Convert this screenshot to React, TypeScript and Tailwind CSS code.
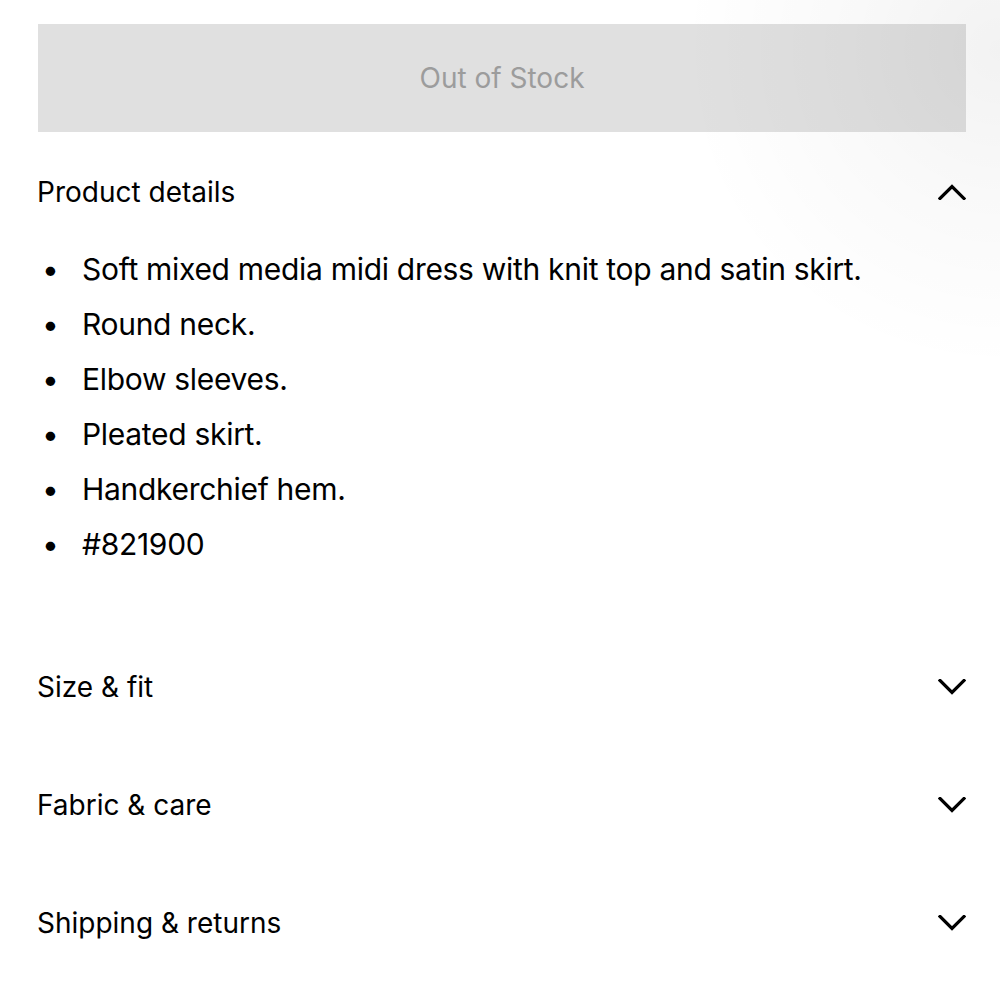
import React from "react"

const details = [
  "Soft mixed media midi dress with knit top and satin skirt.",
  "Round neck.",
  "Elbow sleeves.",
  "Pleated skirt.",
  "Handkerchief hem.",
  "#821900",
]

const sections = ["Size & fit", "Fabric & care", "Shipping & returns"]

function Chevron({ up }: { up?: boolean }) {
  return (
    <svg width="28" height="16" viewBox="0 0 28 16" fill="none" className="shrink-0">
      <path
        d={up ? "M2 14.5 L14 2.5 L26 14.5" : "M2 1.5 L14 13.5 L26 1.5"}
        stroke="#000"
        strokeWidth="3.2"
        strokeLinecap="square"
      />
    </svg>
  )
}

export default function App() {
  return (
    <div className="relative min-h-[1000px] w-[1000px] overflow-hidden bg-white font-['Inter','Noto_Sans',sans-serif] text-black">
      <div className="pl-[38px] pr-[34px] pt-[24px]">
        <button className="flex h-[108px] w-full items-center justify-center bg-[#e0e0e0] text-[28px] text-[#9c9c9c]">
          Out of Stock
        </button>

        <div className="flex items-center justify-between pt-[40px] pb-[30px]">
          <span className="-ml-[1px] text-[28px] leading-[40px]">Product details</span>
          <Chevron up />
        </div>

        <ul className="pb-[56px]">
          {details.map((d) => (
            <li key={d} className="flex h-[55px] items-center text-[30px] tracking-[-0.3px]">
              <span className="w-[44px] pl-[4px]">•</span>
              <span>{d}</span>
            </li>
          ))}
        </ul>

        {sections.map((s) => (
          <div key={s} className="flex h-[118px] items-center justify-between">
            <span className="-ml-[1px] text-[28px]">{s}</span>
            <Chevron />
          </div>
        ))}
      </div>
      <div className="pointer-events-none absolute inset-0 bg-[radial-gradient(circle_at_100%_5%,rgba(0,0,0,0.05)_0px,rgba(0,0,0,0.025)_150px,rgba(0,0,0,0)_320px)]" />
    </div>
  )
}
